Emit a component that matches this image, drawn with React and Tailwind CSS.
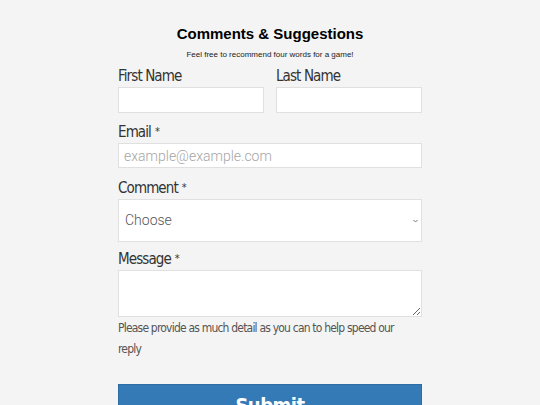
import React from 'react';

const labelFont = {
  fontFamily: '"DejaVu Sans Condensed", "DejaVu Sans", sans-serif',
  fontStretch: 'condensed',
};

const Label = ({ children, required }) => (
  <label className="block text-[15px] leading-[18px] text-[#333] mb-[2px] tracking-[-0.9px]" style={labelFont}>
    {children}
    {required && <span className="text-[11px] ml-[4px] align-[2px]">*</span>}
  </label>
);

export default function App() {
  return (
    <div className="min-h-[405px] w-full bg-[#f4f4f4] flex justify-center overflow-hidden">
      <form className="w-[304px] pt-[25px]" style={{ fontFamily: '"Liberation Sans", Arial, sans-serif' }}>
        <h1 className="text-center text-[15px] font-bold text-black leading-[18px]">Comments &amp; Suggestions</h1>
        <p className="text-center text-[8px] text-[#222] mt-[7px] leading-[10px]">Feel free to recommend four words for a game!</p>

        <div className="grid grid-cols-2 gap-[12px] mt-[7px]">
          <div>
            <Label>First Name</Label>
            <input className="w-full h-[26px] bg-white border border-[#e0e0e0] outline-none" />
          </div>
          <div>
            <Label>Last Name</Label>
            <input className="w-full h-[26px] bg-white border border-[#e0e0e0] outline-none" />
          </div>
        </div>

        <div className="mt-[10px]">
          <Label required>Email</Label>
          <input
            placeholder="example@example.com"
            className="w-full h-[25px] bg-white border border-[#e0e0e0] outline-none px-[5px] text-[14px] placeholder:text-[#a5a5a5]"
            style={{ fontFamily: 'Roboto, sans-serif', fontWeight: 300 }}
          />
        </div>

        <div className="mt-[11px]">
          <Label required>Comment</Label>
          <div className="relative h-[43px] bg-white border border-[#e0e0e0] flex items-center px-[6px]">
            <span className="text-[14px] text-[#555]" style={{ fontFamily: 'Roboto, sans-serif', fontWeight: 300 }}>Choose</span>
            <svg className="absolute right-[3px] top-[19px]" width="5" height="4" viewBox="0 0 5 4">
              <path d="M0.5 1 L2.5 3 L4.5 1" fill="none" stroke="#777" strokeWidth="1" />
            </svg>
          </div>
        </div>

        <div className="mt-[8px]">
          <Label required>Message</Label>
          <textarea className="block w-full h-[47px] bg-white border border-[#e0e0e0] outline-none resize-y" />
        </div>

        <p className="max-w-[285px] text-[12px] leading-[21px] text-[#555] mt-[1px] tracking-[-0.8px]" style={labelFont}>
          Please provide as much detail as you can to help speed our reply
        </p>

        <button
          type="button"
          className="mt-[24px] w-full h-[50px] bg-[#337ab7] border border-[#2e6da4] text-white text-[20px] font-bold flex justify-center pt-[8px] leading-[24px] tracking-[-0.5px]"
          style={labelFont}
        >
          Submit
        </button>
      </form>
    </div>
  );
}
